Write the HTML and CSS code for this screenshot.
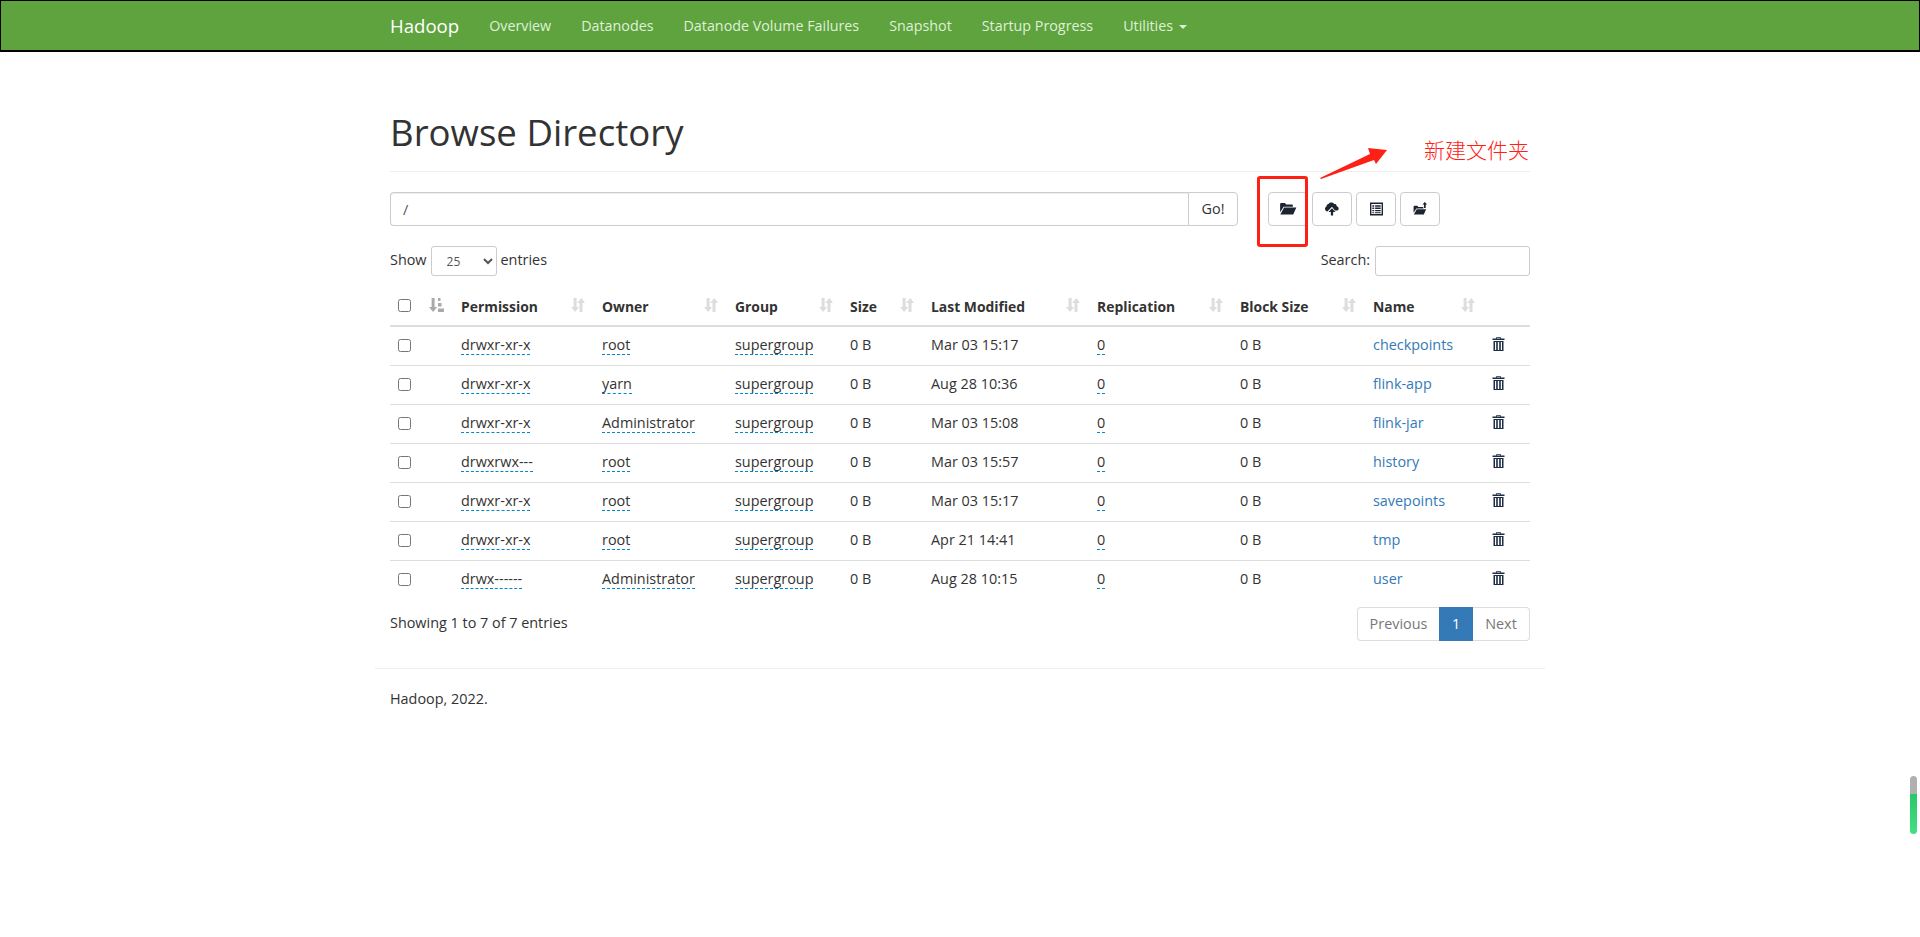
FILE: index.html
```html
<!DOCTYPE html>
<html lang="en">
<head>
<meta charset="utf-8">
<title>Browsing HDFS</title>
<link rel="stylesheet" href="styles.css">
</head>
<body>
<svg class="defs" width="0" height="0" aria-hidden="true">
  <symbol id="sort" viewBox="0 0 14 14"><path d="M2.600 0h3v9h2.600L4.100 14 0 9h2.600zM10.400 0 14 5h-2.500v9h-3V5H6z"/></symbol>
  <symbol id="sorted" viewBox="0 0 15 14"><path d="M2.600 0h3v9h2.600L4.100 14 0 9h2.600z"/><path d="M9 0h2.500v3H9zM9 5h3.500v3.500H9zM9 10.500h6V14H9z"/></symbol>
  <symbol id="trash" viewBox="0 0 13 14"><path d="M4.500 0h4l.5 1.500h3.500v1.500H.5V1.500H4zM5 .8l-.2.700h3.400L8 .8zM1.500 4h10v10h-10zM3 5v8h1.200V5zM5.800 5v8h1.400V5zM8.800 5v8H10V5z"/></symbol>
</svg>

<header class="navbar">
  <div class="container nav-inner">
    <a class="brand">Hadoop</a>
    <nav class="nav">
      <a>Overview</a>
      <a>Datanodes</a>
      <a>Datanode Volume Failures</a>
      <a>Snapshot</a>
      <a>Startup Progress</a>
      <a>Utilities <span class="caret"></span></a>
    </nav>
  </div>
</header>

<main class="container">
  <div class="page-header"><h1>Browse Directory</h1></div>

  <div class="toolbar">
    <div class="input-group">
      <input class="path-input" type="text" value="/">
      <button class="go">Go!</button>
    </div>
    <div class="actions">
      <button class="icon-btn"><svg width="18" height="13" viewBox="0 0 18 14"><path d="M.5 2.500C.5 1.700 1 1.200 1.800 1.200h4L7 2.700h6c.8 0 1.200.4 1.200 1.100V5H4.300L.5 11zM4.800 6H18l-3.400 7.500H.7z"/></svg></button>
      <button class="icon-btn"><svg width="14" height="14" viewBox="0 0 16 15"><path d="M4 1.800C5.700-.6 9.300-.4 10.700 2c.6-.3 1.500-.2 2 .4.500.5.600 1.200.4 1.800 1.500.5 2.500 1.700 2.500 2.900 0 1.100-.8 2.200-2.400 2.200h-1.900L8 5 2.700 10.300C1.200 10.200 0 9 0 7.300c0-1.200.7-2.300 1.700-2.700C1.700 3 2.700 1.900 4 1.800z"/><path d="M8 6.500 12 10.800H9.300V15H6.700v-4.200H4z"/></svg></button>
      <button class="icon-btn"><svg width="13" height="14" viewBox="0 0 14 15"><path fill-rule="evenodd" d="M0 .5h14v14H0zM1.500 2v11h11V2zM2.500 3.500h2v1.500h-2zM5.500 3.500h6v1.500h-6zM2.500 6h2v1.500h-2zM5.500 6h6v1.500h-6zM2.500 8.500h2V10h-2zM5.500 8.500h6V10h-6zM2.500 11h2v1h-2zM5.500 11h6v1h-6z"/></svg></button>
      <button class="icon-btn"><svg width="15" height="13" viewBox="0 0 17 15"><path d="M.5 5.500c0-.7.400-1.100 1.100-1.100h3.300l1 1.300h5c.7 0 1 .3 1 1v.8H3.800L.5 12.500zM4.200 8.400H15l-2.700 6H.8z"/><path d="M13.500 0l2.700 2.800h-1.700V7h-2V2.800h-1.700z"/></svg></button>
    </div>
  </div>

  <div class="table-controls">
    <label class="length">Show <select class="length-select"><option>25</option></select> entries</label>
    <label class="search">Search: <input class="search-input" type="search"></label>
  </div>

  <table class="files">
    <colgroup>
      <col class="c-check"><col class="c-sort"><col class="c-perm"><col class="c-owner"><col class="c-group"><col class="c-size"><col class="c-mod"><col class="c-rep"><col class="c-block"><col class="c-name"><col class="c-del">
    </colgroup>
    <thead>
      <tr>
        <th><input class="check" type="checkbox"></th>
        <th class="sortable"><svg class="sort-icon active"><use href="#sorted"/></svg></th>
        <th class="sortable">Permission<svg class="sort-icon"><use href="#sort"/></svg></th>
        <th class="sortable">Owner<svg class="sort-icon"><use href="#sort"/></svg></th>
        <th class="sortable">Group<svg class="sort-icon"><use href="#sort"/></svg></th>
        <th class="sortable">Size<svg class="sort-icon"><use href="#sort"/></svg></th>
        <th class="sortable">Last Modified<svg class="sort-icon"><use href="#sort"/></svg></th>
        <th class="sortable">Replication<svg class="sort-icon"><use href="#sort"/></svg></th>
        <th class="sortable">Block Size<svg class="sort-icon"><use href="#sort"/></svg></th>
        <th class="sortable">Name<svg class="sort-icon"><use href="#sort"/></svg></th>
        <th></th>
      </tr>
    </thead>
    <tbody>
      <tr><td><input class="check" type="checkbox"></td><td></td><td><span class="edit">drwxr-xr-x</span></td><td><span class="edit">root</span></td><td><span class="edit">supergroup</span></td><td>0 B</td><td>Mar 03 15:17</td><td><span class="edit">0</span></td><td>0 B</td><td><a class="link">checkpoints</a></td><td><svg class="trash"><use href="#trash"/></svg></td></tr>
      <tr><td><input class="check" type="checkbox"></td><td></td><td><span class="edit">drwxr-xr-x</span></td><td><span class="edit">yarn</span></td><td><span class="edit">supergroup</span></td><td>0 B</td><td>Aug 28 10:36</td><td><span class="edit">0</span></td><td>0 B</td><td><a class="link">flink-app</a></td><td><svg class="trash"><use href="#trash"/></svg></td></tr>
      <tr><td><input class="check" type="checkbox"></td><td></td><td><span class="edit">drwxr-xr-x</span></td><td><span class="edit">Administrator</span></td><td><span class="edit">supergroup</span></td><td>0 B</td><td>Mar 03 15:08</td><td><span class="edit">0</span></td><td>0 B</td><td><a class="link">flink-jar</a></td><td><svg class="trash"><use href="#trash"/></svg></td></tr>
      <tr><td><input class="check" type="checkbox"></td><td></td><td><span class="edit">drwxrwx---</span></td><td><span class="edit">root</span></td><td><span class="edit">supergroup</span></td><td>0 B</td><td>Mar 03 15:57</td><td><span class="edit">0</span></td><td>0 B</td><td><a class="link">history</a></td><td><svg class="trash"><use href="#trash"/></svg></td></tr>
      <tr><td><input class="check" type="checkbox"></td><td></td><td><span class="edit">drwxr-xr-x</span></td><td><span class="edit">root</span></td><td><span class="edit">supergroup</span></td><td>0 B</td><td>Mar 03 15:17</td><td><span class="edit">0</span></td><td>0 B</td><td><a class="link">savepoints</a></td><td><svg class="trash"><use href="#trash"/></svg></td></tr>
      <tr><td><input class="check" type="checkbox"></td><td></td><td><span class="edit">drwxr-xr-x</span></td><td><span class="edit">root</span></td><td><span class="edit">supergroup</span></td><td>0 B</td><td>Apr 21 14:41</td><td><span class="edit">0</span></td><td>0 B</td><td><a class="link">tmp</a></td><td><svg class="trash"><use href="#trash"/></svg></td></tr>
      <tr><td><input class="check" type="checkbox"></td><td></td><td><span class="edit">drwx------</span></td><td><span class="edit">Administrator</span></td><td><span class="edit">supergroup</span></td><td>0 B</td><td>Aug 28 10:15</td><td><span class="edit">0</span></td><td>0 B</td><td><a class="link">user</a></td><td><svg class="trash"><use href="#trash"/></svg></td></tr>
    </tbody>
  </table>

  <div class="table-footer">
    <div class="info">Showing 1 to 7 of 7 entries</div>
    <div class="pagination">
      <a class="page prev">Previous</a><a class="page current">1</a><a class="page next">Next</a>
    </div>
  </div>
</main>

<footer class="site-footer"><p>Hadoop, 2022.</p></footer>

<div class="mark-box"></div>
<svg class="mark-arrow" width="75" height="40" viewBox="0 0 75 40"><path d="M1 33 51 9 49 3 68 5 57 19 55 15 2 34z"/></svg>
<div class="mark-text">新建文件夹</div>
<div class="scroll-widget"><div class="scroll-grey"></div><div class="scroll-green"></div></div>
</body>
</html>
```
FILE: styles.css
```css
* { box-sizing: border-box; }
html, body { margin: 0; padding: 0; }
body {
  position: relative;
  min-height: 937px;
  background: #fff;
  color: #333;
  font-family: "Open Sans", "Liberation Sans", sans-serif;
  font-size: 14.4px;
  line-height: 20px;
  overflow: hidden;
}
.defs { position: absolute; }
.container { width: 1170px; margin: 0 auto; padding: 0 15px; }

.navbar {
  height: 52px;
  background: #5fa33e;
  border: 1px solid #000;
  border-bottom-width: 2px;
}
.nav-inner { display: flex; align-items: center; height: 49px; width: 1170px; padding-left: 15px; }
.brand { color: #fff; font-size: 18.6px; margin-right: 30px; }
.nav { display: flex; gap: 30px; font-size: 14.3px; }
.nav a { color: #dff0d8; }
.caret {
  display: inline-block;
  width: 0; height: 0;
  margin-left: 2px;
  vertical-align: middle;
  border-top: 4px solid #dff0d8;
  border-left: 4px solid transparent;
  border-right: 4px solid transparent;
}

.page-header { height: 120px; padding-top: 60px; border-bottom: 1px solid #eee; }
.page-header h1 { margin: 0; font-size: 36.6px; font-weight: 400; line-height: 40px; color: #333; }

.toolbar { display: flex; gap: 30px; margin-top: 20px; height: 34px; }
.input-group { display: flex; width: 848px; }
.path-input {
  flex: 1;
  height: 34px;
  padding: 6px 12px;
  border: 1px solid #ccc;
  border-right: 0;
  border-radius: 4px 0 0 4px;
  box-shadow: inset 0 1px 1px rgba(0,0,0,.075);
  font: inherit;
  color: #555;
}
.go {
  width: 50px;
  border: 1px solid #ccc;
  border-radius: 0 4px 4px 0;
  background: #fff;
  font: inherit;
  color: #333;
  padding: 0;
}
.actions { display: flex; gap: 4px; }
.icon-btn {
  width: 40px;
  height: 34px;
  display: flex;
  align-items: center;
  justify-content: center;
  padding: 0 0 1px;
  background: #fff;
  border: 1px solid #ccc;
  border-radius: 4px;
}
.icon-btn svg { fill: #1c2430; }

.table-controls { display: flex; justify-content: space-between; margin-top: 20px; height: 30px; }
.length, .search { display: flex; align-items: flex-start; line-height: 28px; }
.length-select {
  width: 66px;
  height: 30px;
  margin: 0 4px;
  padding: 0 11px;
  border: 1px solid #ccc;
  border-radius: 3px;
  background: #fff;
  font: 12px "Open Sans", sans-serif;
  color: #555;
}
.search { gap: 5px; }
.search-input {
  width: 155px;
  height: 30px;
  border: 1px solid #ccc;
  border-radius: 3px;
}

.files { width: 1140px; table-layout: fixed; border-collapse: collapse; margin-top: 10px; }
.c-check { width: 31px; }
.c-sort { width: 32px; }
.c-perm { width: 141px; }
.c-owner { width: 133px; }
.c-group { width: 115px; }
.c-size { width: 81px; }
.c-mod { width: 166px; }
.c-rep { width: 143px; }
.c-block { width: 133px; }
.c-name { width: 119px; }
.c-del { width: 46px; }

.files th {
  position: relative;
  height: 40px;
  padding: 9px 8px 7px;
  text-align: left;
  font-size: 13.9px;
  font-weight: 700;
  border-bottom: 2px solid #ddd;
  white-space: nowrap;
}
.files td {
  height: 39px;
  padding: 7px 8px 9px;
  border-bottom: 1px solid #ddd;
  white-space: nowrap;
  vertical-align: middle;
}
.files tbody tr:last-child td { border-bottom-color: transparent; }
.check { display: block; width: 13px; height: 13px; margin: 2px 0 0; }
.files th .check { margin-top: -2px; }
.sort-icon {
  position: absolute;
  right: 9px;
  top: 12px;
  width: 14px;
  height: 14px;
  fill: #ddd;
}
.sort-icon.active { width: 15px; fill: #aaa; }
.edit { border-bottom: 1px dashed #08c; display: inline-block; line-height: 19px; }
.link { color: #337ab7; }
.trash { display: block; width: 13px; height: 14px; fill: #1c2c44; margin: -1px 0 0 0; }

.table-footer { display: flex; justify-content: space-between; align-items: flex-start; margin-top: 7px; }
.info { padding-top: 6px; }
.pagination { display: flex; height: 34px; }
.page {
  display: flex;
  align-items: center;
  justify-content: center;
  height: 34px;
  border: 1px solid #ddd;
  color: #777;
  background: #fff;
}
.prev { width: 82px; border-radius: 4px 0 0 4px; border-right: 0; }
.current { width: 34px; background: #337ab7; border-color: #337ab7; color: #fff; }
.next { width: 57px; border-radius: 0 4px 4px 0; border-left: 0; }

.site-footer { width: 1170px; margin: 27px auto 0; padding: 0 15px; border-top: 1px solid #eee; }
.site-footer p { margin: 20px 0 0; }

.mark-box {
  position: absolute;
  left: 1257px;
  top: 176px;
  width: 51px;
  height: 71px;
  border: 3px solid #ff2015;
  border-radius: 3px;
}
.mark-arrow { position: absolute; left: 1319px; top: 145px; fill: #ff2015; }
.mark-text {
  position: absolute;
  left: 1424px;
  top: 134px;
  font-family: "Noto Sans CJK SC", sans-serif;
  font-size: 21px;
  font-weight: 300;
  line-height: 30px;
  color: #ff2015;
  white-space: nowrap;
}
.scroll-widget {
  position: absolute;
  left: 1910px;
  top: 776px;
  width: 7px;
  height: 58px;
  border-radius: 4px;
  overflow: hidden;
  display: flex;
  flex-direction: column;
}
.scroll-grey { height: 18px; background: #b0b0b0; }
.scroll-green { flex: 1; background: linear-gradient(#28c868, #46dd85); }
```
